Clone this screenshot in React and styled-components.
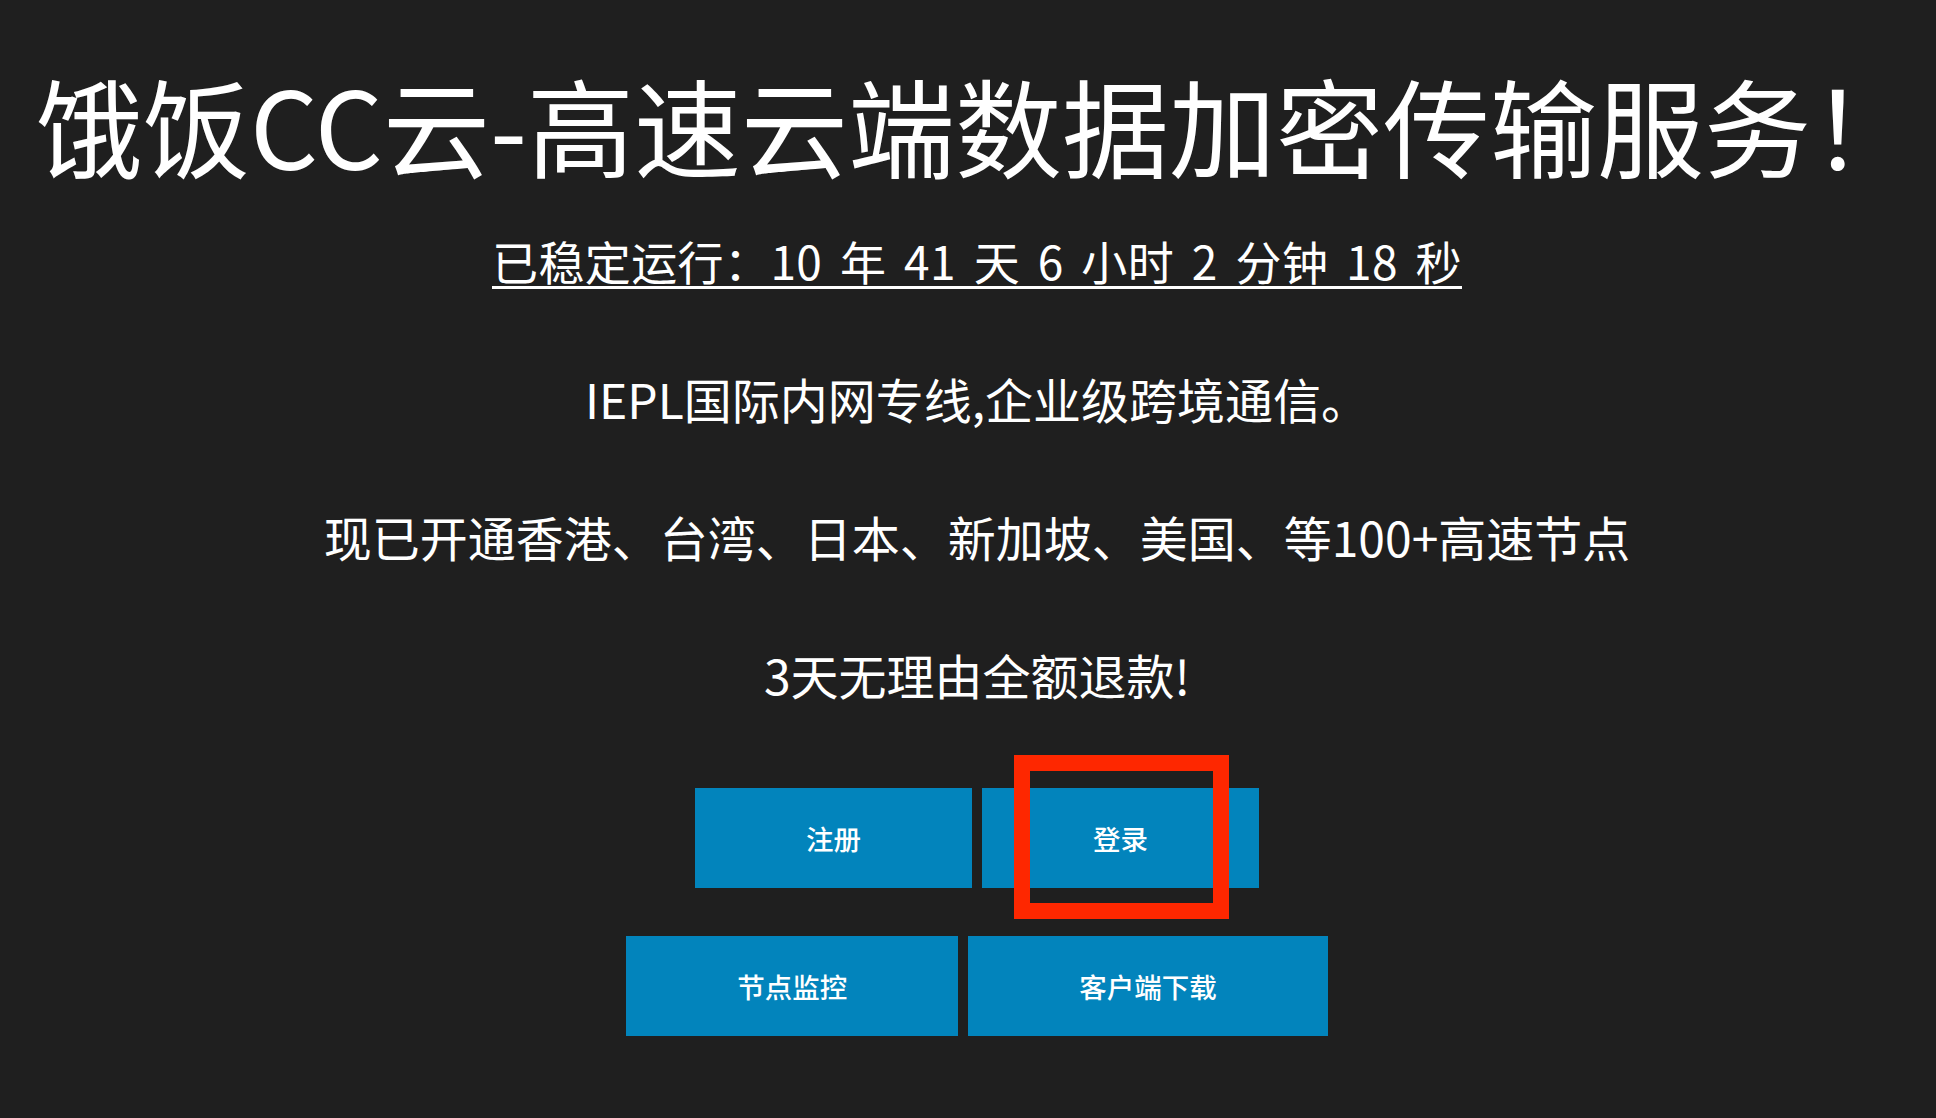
import React from "react";
import styled, { createGlobalStyle } from "styled-components";

const GlobalStyle = createGlobalStyle`
  html, body {
    margin: 0;
    padding: 0;
    background: #1f1f1f;
  }
  body {
    font-family: "Noto Sans CJK SC", "Noto Sans", sans-serif;
    color: #ffffff;
  }
`;

const Page = styled.main`
  min-height: 1118px;
  display: flex;
  flex-direction: column;
  align-items: center;
  padding: 60px 0 0 18px;
  box-sizing: border-box;
  text-align: center;
`;

const Title = styled.h1`
  margin: 0;
  font-size: 107px;
  font-weight: 400;
  line-height: 1.2;
  white-space: nowrap;
`;

const Uptime = styled.a`
  margin-top: 38px;
  font-size: 46px;
  line-height: 1.5;
  color: #ffffff;
  text-decoration: underline;
  text-decoration-thickness: 3px;
  text-underline-offset: 6px;
  word-spacing: 7px;
  letter-spacing: 0.4px;
  white-space: nowrap;
`;

const Line = styled.p`
  margin: ${({ $first }) => ($first ? "67px" : "66px")} 0 0;
  font-size: 48px;
  line-height: 1.5;
  white-space: nowrap;
`;

const ButtonRow = styled.div`
  display: flex;
  justify-content: center;
  gap: 10px;
  margin-top: ${({ $top }) => $top}px;
`;

const Button = styled.a`
  position: relative;
  display: flex;
  align-items: center;
  justify-content: center;
  height: 100px;
  padding: 0 111px;
  background: #0284bc;
  color: #ffffff;
  font-size: 27.5px;
  font-weight: 500;
  text-decoration: none;
  white-space: nowrap;
`;

const Highlight = styled.span`
  position: absolute;
  left: 32px;
  top: -33px;
  width: 215px;
  height: 164px;
  border: 16px solid #fe2700;
  box-sizing: border-box;
  pointer-events: none;
`;

export default function App() {
  return (
    <>
      <GlobalStyle />
      <Page>
        <Title>饿饭CC云-高速云端数据加密传输服务！</Title>
        <Uptime href="#">已稳定运行：10 年 41 天 6 小时 2 分钟 18 秒</Uptime>
        <Line $first>IEPL国际内网专线,企业级跨境通信。</Line>
        <Line>现已开通香港、台湾、日本、新加坡、美国、等100+高速节点</Line>
        <Line>3天无理由全额退款!</Line>
        <ButtonRow $top={78}>
          <Button href="#">注册</Button>
          <Button href="#">
            登录
            <Highlight />
          </Button>
        </ButtonRow>
        <ButtonRow $top={48}>
          <Button href="#">节点监控</Button>
          <Button href="#">客户端下载</Button>
        </ButtonRow>
      </Page>
    </>
  );
}
